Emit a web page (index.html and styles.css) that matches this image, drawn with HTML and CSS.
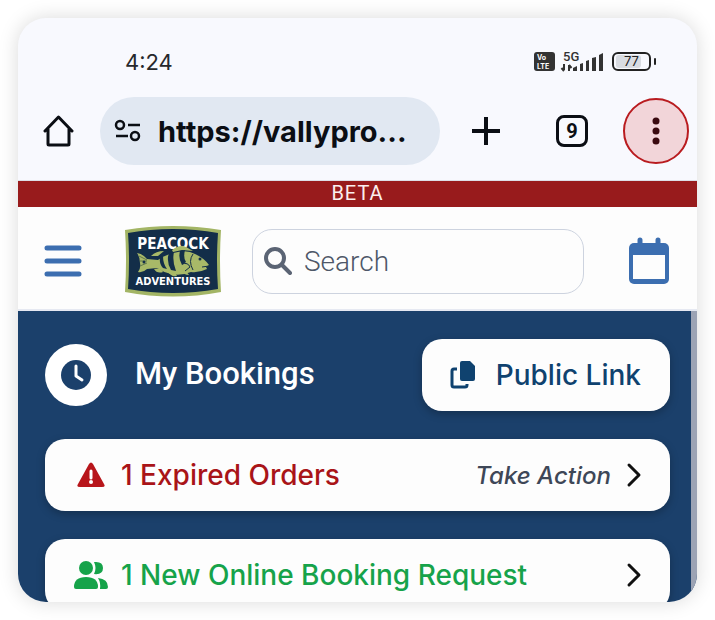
FILE: index.html
```html
<!DOCTYPE html>
<html lang="en">
<head>
  <meta charset="UTF-8">
  <title>Peacock Adventures - My Bookings</title>
  <meta name="viewport" content="width=device-width, initial-scale=1.0">
  <link rel="stylesheet" href="styles.css">
</head>
<body>

  <div class="phone">

    <div class="status-bar">
      <span class="clock">4:24</span>
      <svg class="status-icons" width="124" height="26" viewBox="0 0 124 26" role="img" aria-label="VoLTE, 5G, battery 77">
        <rect x="1" y="3" width="21" height="19" rx="3" fill="#333"/>
        <text class="volte" x="4" y="11">Vo</text>
        <text class="volte" x="4" y="20">LTE</text>
        <text class="network" x="30" y="12">5G</text>
        <path d="M31 15v6M28.500 19l2.500 3M36 22v-6M38.500 19l-2.500-3" fill="none" stroke="#333" stroke-width="2"/>
        <path d="M40 19l4-2v5h-4zM47 15l3-1v8h-3zM53 12l3-1v11h-3zM59 9l4-1v14h-4zM66 6l4-2v18h-4z" fill="#333"/>
        <rect x="80" y="4" width="37" height="17" rx="5" fill="none" stroke="#222" stroke-width="2"/>
        <rect x="83" y="6" width="25" height="13" rx="3" fill="#d9dce2"/>
        <path d="M122 10v5" stroke="#222" stroke-width="2" stroke-linecap="round"/>
        <text class="battery" x="91" y="17">77</text>
      </svg>
    </div>

    <div class="toolbar">
      <button class="icon-btn" aria-label="Home">
        <svg width="32" height="34" viewBox="0 0 32 34" fill="none" stroke="#0b0e14" stroke-width="3" stroke-linejoin="round" stroke-linecap="round">
          <path d="M2 17L15.500 3 29 17M5 15v15q0 1 1 1h19q1 0 1-1V15"/>
        </svg>
      </button>
      <button class="address">
        <svg width="28" height="24" viewBox="0 0 28 24" fill="none" stroke="#0b0e14" stroke-width="2.500">
          <circle cx="6" cy="6" r="4"/>
          <path d="M14 6h12M2 17h12"/>
          <circle cx="21" cy="17" r="4"/>
        </svg>
        <span>https://vallypro...</span>
      </button>
      <div class="toolbar-actions">
        <button class="icon-btn" aria-label="New tab">
          <svg width="32" height="32" viewBox="0 0 32 32" stroke="#0b0e14" stroke-width="4">
            <path d="M16 2v28M2 16h28"/>
          </svg>
        </button>
        <button class="tab-count" aria-label="9 open tabs">9</button>
        <button class="menu-btn" aria-label="Menu">
          <svg width="10" height="30" viewBox="0 0 10 30" fill="#3a0a10">
            <circle cx="5" cy="5" r="3.500"/>
            <circle cx="5" cy="15" r="3.500"/>
            <circle cx="5" cy="25" r="3.500"/>
          </svg>
        </button>
      </div>
    </div>

    <div class="beta">BETA</div>

    <header class="site-header">
      <button class="icon-btn" aria-label="Open navigation">
        <svg width="38" height="34" viewBox="0 0 38 34" stroke="#3c6eb0" stroke-width="5" stroke-linecap="round">
          <path d="M3 4h32M3 17h32M3 30h32"/>
        </svg>
      </button>
      <a class="logo" href="#" aria-label="Peacock Adventures">
        <svg width="98" height="72" viewBox="0 0 98 72">
          <path d="M1 5Q49-3 97 5Q95 36 97 67Q49 76 1 67Q3 36 1 5z" fill="#a3b565"/>
          <path d="M4 8Q49 0 94 8Q92 36 94 64Q49 72 4 64Q6 36 4 8z" fill="#132e49"/>
          <text class="logo-top" x="49" y="24">PEACOCK</text>
          <g fill="#a8b968">
            <path d="M13 28q6 1 10 6l11 1q8-6 20-8 10-2 17 2 9 4 14 11l-3 2 1 2q-8 4-16 3-10 4-20 2-8-2-14-6l-10 1q-4 4-9 3 3-4 2-9 0-6-3-10z"/>
            <path d="M27 31q5-5 13-5l-6 5zM48 25q8-6 14-3l7 4-11-1-9 2zM30 44q7-2 9 3-6 2-9-3zM44 47q7-1 9 4-6 1-9-4zM57 46q6 0 8 4-5 0-8-4z"/>
          </g>
          <path d="M36 32l3-1q0 8 4 13l-4-1q-4-4-3-11zM45 28l5-1q-2 9 2 19l-5-1q-5-9-2-17zM56 26l5-1q-2 8 1 12l-4 3q-4-7-2-14z" fill="#132e49"/>
          <path d="M69 29q-5 7 0 16M78 42l7-1M58 39q6-2 8 3l-5 4" fill="none" stroke="#132e49"/>
          <path d="M15 31l8 4M16 36h7M16 41l7-3" stroke="#60784d"/>
          <circle cx="76" cy="34" r="1.500" fill="#132e49"/>
          <circle cx="20" cy="37" r="1.500" fill="#132e49"/>
          <text class="logo-bottom" x="49" y="60">ADVENTURES</text>
        </svg>
      </a>
      <label class="search">
        <svg width="28" height="28" viewBox="0 0 28 28" fill="none" stroke="#5b6474" stroke-linecap="round">
          <circle cx="11" cy="11" r="9" stroke-width="4"/>
          <path d="M18 18l8 8" stroke-width="4"/>
        </svg>
        <input type="text" placeholder="Search" aria-label="Search">
      </label>
      <button class="icon-btn" aria-label="Calendar">
        <svg width="42" height="48" viewBox="0 0 42 48">
          <path d="M12 3v8M30 3v8" stroke="#3c6eb0" stroke-width="5" stroke-linecap="round"/>
          <rect x="1" y="6" width="40" height="41" rx="5" fill="#3c6eb0"/>
          <path d="M5 18h32v24H5z" fill="#fdfdfd"/>
        </svg>
      </button>
    </header>

    <main class="bookings">
      <div class="bookings-head">
        <svg width="62" height="62" viewBox="0 0 62 62" fill="none">
          <circle cx="31" cy="31" r="31" fill="#fff"/>
          <circle cx="31" cy="31" r="15" fill="#1b406b"/>
          <path d="M31 22v10l6 4" stroke="#fff" stroke-width="3" stroke-linecap="round" stroke-linejoin="round"/>
        </svg>
        <h1>My Bookings</h1>
        <button class="public-link">
          <svg width="26" height="30" viewBox="0 0 26 30">
            <path d="M7 9H4q-2 0-2 2v14q0 2 2 2h11q2 0 2-2v-1" fill="none" stroke="#0f426f" stroke-width="3"/>
            <path d="M12 1h8l5 5v13q0 2-2 2H12q-2 0-2-2V3q0-2 2-2z" fill="#0f426f"/>
          </svg>
          <span>Public Link</span>
        </button>
      </div>

      <a class="notice expired" href="#">
        <span class="notice-icon">
          <svg width="28" height="26" viewBox="0 0 28 26">
            <path d="M12 2q2-3 4 0l11 20q2 3-2 3H3q-4 0-2-3z" fill="#b8161b"/>
            <path d="M14 9v7" stroke="#fff" stroke-width="3" stroke-linecap="round"/>
            <circle cx="14" cy="20" r="2" fill="#fff"/>
          </svg>
        </span>
        <span class="notice-text">1 Expired Orders</span>
        <em>Take Action</em>
        <svg class="chevron" width="16" height="28" viewBox="0 0 16 28">
          <path d="M3 4l10 10L3 24"/>
        </svg>
      </a>

      <a class="notice request" href="#">
        <span class="notice-icon">
          <svg width="36" height="30" viewBox="0 0 36 30" fill="#16a34a">
            <circle cx="13" cy="8" r="7"/>
            <path d="M1 27q0-10 12-10t12 10q0 2-2 2H3q-2 0-2-2z"/>
            <path d="M21 2q9-1 9 6 0 7-9 6 3-6 0-12zM25 18q10 1 10 9 0 2-2 2h-6q1-6-2-11z"/>
          </svg>
        </span>
        <span class="notice-text">1 New Online Booking Request</span>
        <svg class="chevron" width="16" height="28" viewBox="0 0 16 28">
          <path d="M3 4l10 10L3 24"/>
        </svg>
      </a>
    </main>

  </div>

</body>
</html>
```

FILE: styles.css
```css
* {
  box-sizing: border-box;
}

body {
  margin: 0;
  padding: 18px;
  height: 100vh;
  background: #fff;
  font-family: Inter, sans-serif;
}

button {
  padding: 0;
  border: none;
  background: none;
  font-family: inherit;
  cursor: pointer;
}

svg {
  display: block;
  flex-shrink: 0;
}

.phone {
  display: flex;
  flex-direction: column;
  height: 100%;
  overflow: hidden;
  border-radius: 28px;
  background: #f8f9fe;
  box-shadow: 0 0 20px rgba(0, 0, 0, 0.15);
}

/* Phone status bar */
.status-bar {
  display: flex;
  justify-content: space-between;
  align-items: center;
  padding: 30px 40px 0 107px;
}

.clock {
  font-size: 22px;
  line-height: 28px;
  color: #26282c;
}

.volte {
  font: 700 7px Inter, sans-serif;
  fill: #fff;
}

.network {
  font: 500 13px Roboto, sans-serif;
  fill: #333;
}

.battery {
  font: 13px Inter, sans-serif;
  fill: #222;
}

/* Browser toolbar */
.toolbar {
  display: flex;
  align-items: center;
  gap: 25px;
  padding: 21px 8px 15px 25px;
  border-bottom: 1px solid #dddfe6;
}

.address {
  display: flex;
  flex: 1;
  align-items: center;
  gap: 16px;
  min-width: 0;
  height: 68px;
  padding: 0 14px;
  border-radius: 34px;
  background: #e1e8f2;
  color: #0b0e14;
  font-size: 29px;
  font-weight: 700;
}

.toolbar-actions {
  display: flex;
  align-items: center;
  padding-left: 5px;
}

.tab-count {
  width: 32px;
  height: 32px;
  margin: 0 35px 0 54px;
  border: 3px solid #0b0e14;
  border-radius: 8px;
  color: #0b0e14;
  font-family: Roboto, sans-serif;
  font-size: 20px;
  font-weight: 700;
}

.menu-btn {
  display: flex;
  justify-content: center;
  align-items: center;
  width: 66px;
  height: 66px;
  border: 2px solid #b91c20;
  border-radius: 50%;
  background: #f2d5d9;
}

.beta {
  background: #981b1c;
  color: #fbeeee;
  font-family: Roboto, sans-serif;
  font-size: 20px;
  line-height: 24px;
  padding-bottom: 2px;
  letter-spacing: 1px;
  text-align: center;
}

/* Site header */
.site-header {
  display: flex;
  align-items: center;
  padding: 18px 27px 12px 26px;
  border-bottom: 2px solid #e6e9f2;
  background: #fdfdfd;
}

.logo {
  margin: 0 30px 0 42px;
}

.logo-top,
.logo-bottom {
  fill: #fff;
  font-family: "DejaVu Sans Condensed", "DejaVu Sans", sans-serif;
  font-weight: 700;
  text-anchor: middle;
}

.logo-top {
  font-size: 15px;
}

.logo-bottom {
  font-size: 11px;
}

.search {
  display: flex;
  flex: 1;
  align-items: center;
  gap: 12px;
  min-width: 0;
  height: 65px;
  margin-right: 44px;
  padding: 0 12px 0 11px;
  border: 1px solid #cdd3df;
  border-radius: 20px;
}

.search input {
  flex: 1;
  min-width: 0;
  padding: 0;
  border: none;
  outline: none;
  background: none;
  font-family: Roboto, sans-serif;
  font-size: 28px;
  font-weight: 300;
}

.search input::placeholder {
  color: #4e5768;
}

/* Bookings */
.bookings {
  display: flex;
  flex: 1;
  flex-direction: column;
  gap: 28px;
  min-height: 0;
  padding: 28px 21px 0 27px;
  overflow: hidden;
  border-right: 6px solid #9ca3b4;
  background: #1b406b;
}

.bookings-head {
  display: flex;
  align-items: center;
  gap: 28px;
}

.bookings-head h1 {
  flex: 1;
  margin: 0;
  padding-bottom: 4px;
  color: #fff;
  font-family: Roboto, sans-serif;
  font-size: 31px;
  font-weight: 500;
}

.public-link,
.notice {
  display: flex;
  flex-shrink: 0;
  align-items: center;
  height: 72px;
  border-radius: 20px;
  background: #fdfdfd;
  box-shadow: 0 3px 8px rgba(0, 0, 0, 0.25);
}

.public-link {
  gap: 20px;
  padding: 0 29px 0 28px;
  color: #0f426f;
  font-size: 28px;
  font-weight: 500;
}

.notice {
  padding: 0 28px;
  text-decoration: none;
  font-size: 28px;
  font-weight: 500;
}

.notice-icon {
  display: flex;
  justify-content: center;
  width: 36px;
  margin-right: 12px;
}

.notice-text {
  flex: 1;
  white-space: nowrap;
}

.notice em {
  margin-right: 15px;
  color: #3e4757;
  font-size: 24px;
}

.expired {
  color: #a91418;
}

.request {
  color: #16a34a;
}

.chevron path {
  fill: none;
  stroke: #111;
  stroke-width: 3;
  stroke-linecap: round;
  stroke-linejoin: round;
}
```
